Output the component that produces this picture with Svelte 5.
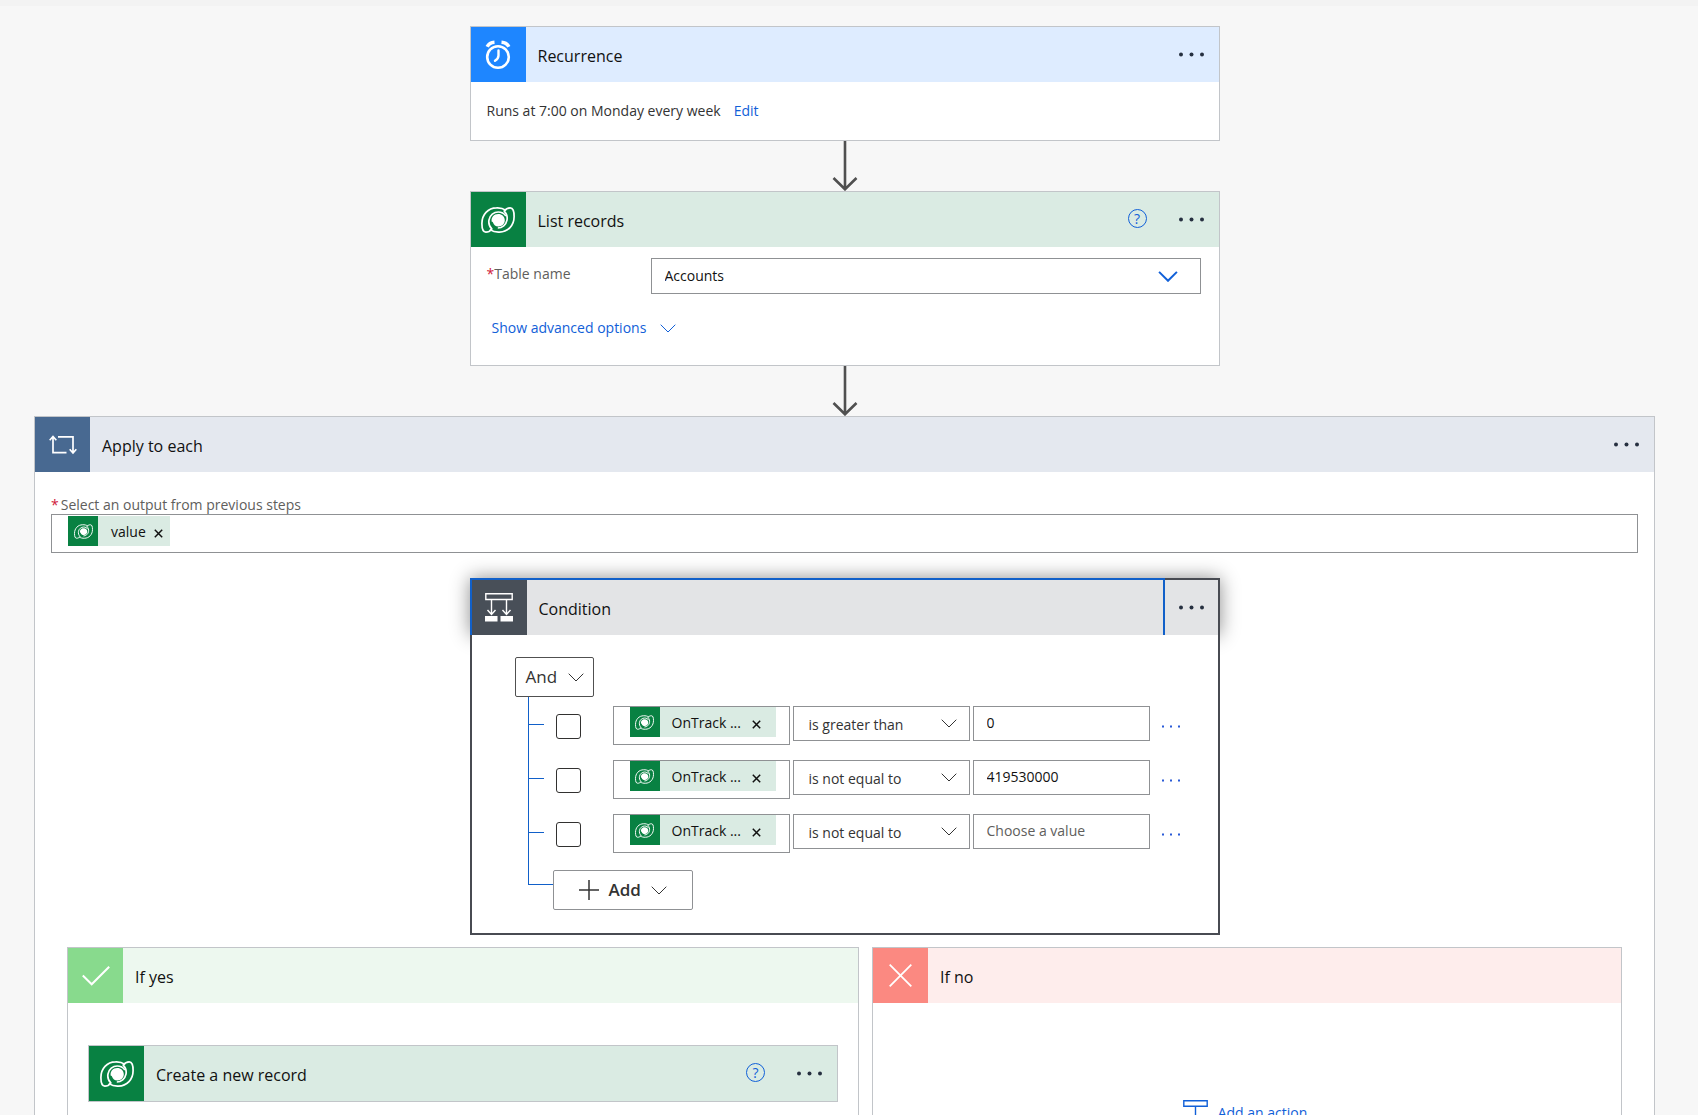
<script lang="ts">
  type Row = { id: number; operator: string; value: string };

  const operators = ["is greater than", "is less than", "is equal to", "is not equal to"];

  let table = $state("Accounts");
  let rows = $state<Row[]>([
    { id: 1, operator: "is greater than", value: "0" },
    { id: 2, operator: "is not equal to", value: "419530000" },
    { id: 3, operator: "is not equal to", value: "" },
  ]);
</script>

{#snippet dataverse()}
  <svg class="dataverse" viewBox="0 0 34 26" aria-hidden="true">
    <g fill="none" stroke="currentColor" stroke-width="1.700" stroke-linejoin="round">
      <path d="M25.200 3.400C22 1.400 18.500.7 15.500.9 7 1 .9 7.500.9 16.500.9 22 2 25.100 4.800 25.100c2.500 0 4.600-1.300 6-3.200C8.400 19.600 7.400 16.200 8 12.800 8.900 8.200 12.800 5 17.200 5c3.200 0 6 1.500 7.700 4" />
      <path d="M8.800 22.600C12 24.600 15.500 25.300 18.500 25.100 27 25 33.100 18.500 33.100 9.500 33.100 4 32 .9 29.200.9c-2.500 0-4.600 1.300-6 3.200C25.600 6.400 26.600 9.800 26 13.200 25.100 17.800 21.200 21 16.800 21" />
    </g>
    <path fill="currentColor" d="M10.800 15C9.800 10.500 13 7 17.200 7c3.800 0 6.600 2.700 6.600 6.200s-2.800 6.200-6.400 6.200c-2.800 0-4.600-1.500-5.200-3.400-.4-1-.9-1.400-1.400-1z" />
  </svg>
{/snippet}

{#snippet chevron(cls: string)}
  <svg class="chevron {cls}" viewBox="0 0 16 9" aria-hidden="true">
    <path d="M.7.7 8 8 15.300.7" fill="none" stroke="currentColor" vector-effect="non-scaling-stroke" />
  </svg>
{/snippet}

{#snippet menu()}
  <button class="menu" aria-label="More commands">
    <svg width="25" height="5" viewBox="0 0 25 5" fill="currentColor" aria-hidden="true">
      <circle cx="2" cy="2.500" r="2" />
      <circle cx="12.500" cy="2.500" r="2" />
      <circle cx="23" cy="2.500" r="2" />
    </svg>
  </button>
{/snippet}

{#snippet help()}
  <button class="help" aria-label="Help">?</button>
{/snippet}

{#snippet arrow()}
  <svg class="arrow" width="26" height="50" viewBox="0 0 26 50" aria-hidden="true">
    <path d="M13 0V48M1.500 37 13 48.300 24.500 37" fill="none" stroke="#505050" stroke-width="2.600" />
  </svg>
{/snippet}

{#snippet token(label: string)}
  <span class="token">
    <span class="token-icon">{@render dataverse()}</span>
    <span class="token-label">{label}</span>
    <button class="remove" aria-label="Remove {label}">
      <svg width="9" height="9" viewBox="0 0 9 9" aria-hidden="true">
        <path d="M.8.8 8.200 8.200M8.200.8.8 8.200" stroke="currentColor" stroke-width="1.500" />
      </svg>
    </button>
  </span>
{/snippet}

<main>
  <section class="card narrow">
    <header class="blue">
      <span class="icon">
        <svg width="26" height="30" viewBox="0 0 26 30" fill="none" stroke="currentColor" aria-hidden="true">
          <circle cx="13" cy="17" r="10.800" stroke-width="2.600" />
          <path d="M13.500 10.500V15.500C13.500 18 12 19.500 10 20.800" stroke-width="2.400" stroke-linecap="round" />
          <path d="M2.200 6.800C3.500 4.200 6 2.500 9.500 2.300M23.800 6.800C22.500 4.200 20 2.500 16.500 2.300" stroke-width="3.600" />
        </svg>
      </span>
      <h2>Recurrence</h2>
      {@render menu()}
    </header>
    <div class="summary">
      <span>Runs at 7:00 on Monday every week</span>
      <a href="#edit">Edit</a>
    </div>
  </section>

  {@render arrow()}

  <section class="card narrow">
    <header class="green">
      <span class="icon">{@render dataverse()}</span>
      <h2>List records</h2>
      {@render help()}
      {@render menu()}
    </header>
    <div class="params">
      <div class="param">
        <label for="table"><span class="required">*</span>Table name</label>
        <div class="select table">
          <select id="table" bind:value={table}>
            <option>Accounts</option>
            <option>Contacts</option>
          </select>
          {@render chevron("large")}
        </div>
      </div>
      <button class="link advanced">Show advanced options {@render chevron("")}</button>
    </div>
  </section>

  {@render arrow()}

  <section class="card scope">
    <header class="slate">
      <span class="icon">
        <svg width="28" height="20" viewBox="0 0 28 20" fill="none" stroke="currentColor" stroke-width="1.700" aria-hidden="true">
          <path d="M17.500 17.700H4V2M.7 5.200 4 1.500 7.300 5.200" />
          <path d="M9 1.800H24V17.500M20.700 14.300 24 18 27.300 14.300" />
        </svg>
      </span>
      <h2>Apply to each</h2>
      {@render menu()}
    </header>
    <div class="scope-body">
      <div class="output">
        <span class="output-label"><span class="required">*</span>Select an output from previous steps</span>
        <div class="token-box">{@render token("value")}</div>
      </div>

      <section class="condition">
        <header class="grey">
          <div class="selected">
            <span class="icon">
              <svg width="28" height="29" viewBox="0 0 28 29" fill="none" stroke="currentColor" aria-hidden="true">
                <path d="M.8.8H27.200V6.500H.8ZM6.500 7V21M21.500 7V21M2.500 17 6.500 21.500 10.500 17M17.500 17 21.500 21.500 25.500 17" stroke-width="1.400" />
                <path d="M0 23H12.500V28.500H0ZM15.500 23H28V28.500H15.500Z" fill="currentColor" stroke="none" />
              </svg>
            </span>
            <h2>Condition</h2>
          </div>
          {@render menu()}
        </header>
        <div class="condition-body">
          <button class="box-button and">And {@render chevron("")}</button>
          <div class="rows">
            {#each rows as row (row.id)}
              <div class="row">
                <input type="checkbox" aria-label="Select row {row.id}" />
                <div class="token-box operand">{@render token("OnTrack ...")}</div>
                <div class="select operator">
                  <select aria-label="Operator {row.id}" bind:value={row.operator}>
                    {#each operators as operator}
                      <option>{operator}</option>
                    {/each}
                  </select>
                  {@render chevron("")}
                </div>
                <input class="value" aria-label="Value {row.id}" placeholder="Choose a value" bind:value={row.value} />
                <button class="row-menu" aria-label="Row commands">
                  <svg width="19" height="3" viewBox="0 0 19 3" fill="currentColor" aria-hidden="true">
                    <path d="M0 .5H2V2.500H0ZM8 .5H10V2.500H8ZM16 .5H18V2.500H16Z" />
                  </svg>
                </button>
              </div>
            {/each}
          </div>
          <div class="add-row">
            <button class="box-button add">
              <svg width="20" height="20" viewBox="0 0 20 20" aria-hidden="true">
                <path d="M10 0V20M0 10H20" stroke="currentColor" stroke-width="1.500" />
              </svg>
              Add {@render chevron("")}
            </button>
          </div>
        </div>
      </section>

      <div class="branches">
        <section class="card yes">
          <header class="lime">
            <span class="icon">
              <svg width="28" height="20" viewBox="0 0 28 20" aria-hidden="true">
                <path d="M.8 9.500 9.700 18.300 27.200.8" fill="none" stroke="currentColor" stroke-width="2" />
              </svg>
            </span>
            <h2>If yes</h2>
          </header>
          <div class="branch-body">
            <section class="card">
              <header class="green">
                <span class="icon">{@render dataverse()}</span>
                <h2>Create a new record</h2>
                {@render help()}
                {@render menu()}
              </header>
            </section>
          </div>
        </section>

        <section class="card no">
          <header class="red">
            <span class="icon">
              <svg width="23" height="23" viewBox="0 0 23 23" aria-hidden="true">
                <path d="M.7.7 22.300 22.300M22.300.7.7 22.300" stroke="currentColor" stroke-width="1.800" />
              </svg>
            </span>
            <h2>If no</h2>
          </header>
          <div class="actions">
            <button class="link action">
              <svg width="25" height="26" viewBox="0 0 25 26" fill="none" stroke="currentColor" stroke-width="1.400" aria-hidden="true">
                <path d="M.8.8H24.200V6.200H.8ZM12.500 6.500V25M7.500 20 12.500 25 17.500 20" />
              </svg>
              Add an action
            </button>
          </div>
        </section>
      </div>
    </div>
  </section>
</main>

<style>
  :global(body) {
    margin: 0;
    background: #f7f7f7;
  }

  main {
    box-sizing: border-box;
    height: 100vh;
    overflow: hidden;
    padding: 20px 43px 0 34px;
    border-top: 6px solid #f3f3f3;
    display: flex;
    flex-direction: column;
    align-items: center;
    color: #333;
    font-family: "Segoe UI", "Open Sans", sans-serif;
    font-size: 14px;
    line-height: 20px;
  }

  main > * {
    flex-shrink: 0;
  }

  button,
  input,
  select {
    box-sizing: border-box;
    margin: 0;
    padding: 0;
    border: none;
    border-radius: 0;
    background: none;
    color: inherit;
    font: inherit;
  }

  svg {
    display: block;
    flex: none;
  }

  h2 {
    flex: 1;
    margin: 0;
    padding: 2px 0 0 12px;
    color: #111;
    font-size: 16px;
    font-weight: 400;
    line-height: 24px;
  }

  a,
  .link {
    color: #1160d8;
    text-decoration: none;
  }

  .card {
    box-sizing: border-box;
    border: 1px solid #c2c5c9;
    background: #fff;
  }

  .narrow {
    width: 750px;
    max-width: 100%;
  }

  header {
    display: flex;
    align-items: center;
    height: 55px;
  }

  .icon {
    flex: none;
    display: flex;
    align-items: center;
    justify-content: center;
    width: 55px;
    height: 55px;
    color: #fff;
  }

  .blue { background: #deecff; }
  .blue .icon { background: #1e86ff; }
  .green { background: #daebe3; }
  .green .icon { background: #088142; }
  .slate { background: #e4e8ef; }
  .slate .icon { background: #486991; }
  .grey .icon { background: #484f58; }
  .lime { background: #edf8ef; }
  .lime .icon { background: #88da8d; }
  .red { background: #feedec; }
  .red .icon { background: #fb8981; }

  .dataverse {
    width: 34px;
    height: 26px;
  }

  .menu {
    flex: none;
    display: flex;
    align-items: center;
    justify-content: center;
    width: 55px;
    height: 55px;
    color: #263040;
  }

  .help {
    flex: none;
    width: 19px;
    height: 19px;
    margin: 0 17px 2px 0;
    border: 1px solid #1160d8;
    border-radius: 50%;
    color: #1160d8;
    font-size: 14px;
    line-height: 17px;
  }

  .chevron {
    width: 16px;
    height: 9px;
  }

  .chevron.large {
    width: 20px;
    height: 11px;
    color: #1160d8;
    stroke-width: 2px;
  }

  .summary {
    display: flex;
    gap: 13px;
    padding: 19px 16px;
  }

  .params {
    padding: 11px 18px 27px 16px;
  }

  .param {
    display: flex;
    margin-bottom: 24px;
  }

  .param label {
    width: 164px;
    padding-top: 6px;
    color: #605e5c;
  }

  .required {
    color: #d0203a;
  }

  .select {
    display: grid;
    align-items: center;
  }

  .select select,
  .select .chevron {
    grid-area: 1 / 1;
  }

  .select select {
    width: 100%;
    height: 100%;
    appearance: none;
    border: 1px solid #8f9194;
  }

  .select .chevron {
    justify-self: end;
    margin-right: 13px;
    pointer-events: none;
  }

  .table {
    flex: 1;
    height: 36px;
  }

  .table select {
    padding: 0 13px;
    color: #111;
  }

  .select .chevron.large {
    margin-right: 23px;
  }

  .advanced {
    display: flex;
    align-items: center;
    gap: 14px;
    margin-left: 5px;
  }

  .scope {
    width: 100%;
  }

  .scope-body {
    display: flex;
    flex-direction: column;
    align-items: center;
    padding-top: 24px;
  }

  .output {
    align-self: stretch;
    margin: 0 16px 25px;
  }

  .output-label {
    display: block;
    color: #605e5c;
    line-height: 18px;
  }

  .output-label .required {
    margin-right: 2px;
  }

  .token-box {
    box-sizing: border-box;
    display: flex;
    height: 39px;
    padding: 1px 16px;
    border: 1px solid #8f9194;
  }

  .token {
    display: flex;
    align-items: center;
    height: 30px;
    background: #daebe3;
    color: #111;
    white-space: nowrap;
  }

  .token-icon {
    display: flex;
    align-items: center;
    justify-content: center;
    width: 30px;
    height: 30px;
    background: #088142;
    color: #fff;
  }

  .token-icon .dataverse {
    width: 19px;
    height: 15px;
  }

  .token-label {
    margin: 0 8px 0 13px;
    padding-top: 2px;
  }

  .remove {
    padding: 4px 7px 0 0;
  }

  .condition {
    width: 750px;
    max-width: 100%;
  }

  .grey {
    height: 57px;
    background: #e3e4e6;
    box-shadow: 0 0 18px rgba(0, 0, 0, 0.45);
  }

  .selected {
    flex: 1;
    display: flex;
    align-items: center;
    border: 2px solid #1160c9;
    border-bottom: none;
  }

  .grey .menu {
    box-sizing: border-box;
    height: 57px;
    border: 2px solid #484b52;
    border-width: 2px 2px 0 0;
  }

  .condition-body {
    position: relative;
    padding: 22px 37px 23px 43px;
    border: 2px solid #484b52;
    border-top: none;
    background: #fff;
  }

  .box-button {
    display: flex;
    align-items: center;
    height: 40px;
    border: 1px solid #505050;
    border-radius: 2px;
    font-size: 17px;
  }

  .and {
    gap: 11px;
    padding: 0 9px 0 10px;
  }

  .rows {
    margin-left: 13px;
    padding-top: 9px;
    border-left: 1px solid #1160c9;
  }

  .row {
    display: flex;
    align-items: flex-start;
    height: 54px;
  }

  .row::before {
    content: "";
    width: 15px;
    height: 1px;
    margin: 18px 12px 0 0;
    background: #1160c9;
  }

  input[type="checkbox"] {
    flex: none;
    width: 25px;
    height: 25px;
    margin: 8px 32px 0 0;
    appearance: none;
    border: 1px solid #323130;
    border-radius: 3px;
  }

  .operand,
  .operator,
  .value {
    flex: 1 1 177px;
    min-width: 0;
    margin-right: 3px;
  }

  .operand {
    padding-top: 0;
  }

  .operand .token-label {
    margin: 0 11px 0 12px;
  }

  .operand .remove {
    padding: 4px 15px 0 0;
  }

  .operator,
  .value {
    height: 35px;
  }

  .operator select {
    padding: 2px 15px 0;
  }

  .value {
    padding: 0 13px 2px;
    border: 1px solid #8f9194;
    color: #111;
  }

  .value::placeholder {
    color: #605e5c;
    opacity: 1;
  }

  .row-menu {
    margin: 19px 0 0 9px;
    color: #2a5bd7;
  }

  .add-row {
    display: flex;
    margin-left: 13px;
  }

  .add-row::before {
    content: "";
    box-sizing: border-box;
    width: 25px;
    height: 17px;
    border: 1px solid #1160c9;
    border-width: 0 0 1px 1px;
  }

  .add {
    gap: 10px;
    margin-top: 2px;
    padding: 0 25px;
    border-color: #8f9194;
    font-weight: 600;
  }

  .branches {
    align-self: stretch;
    display: flex;
    gap: 13px;
    margin: 12px 32px 0;
  }

  .yes {
    flex: 1 1 792px;
  }

  .no {
    flex: 1 1 750px;
  }

  .branch-body {
    padding: 42px 20px;
  }

  .actions {
    display: flex;
    justify-content: center;
    padding: 97px 4px 40px 0;
  }

  .action {
    display: flex;
    align-items: center;
    gap: 10px;
  }
</style>
